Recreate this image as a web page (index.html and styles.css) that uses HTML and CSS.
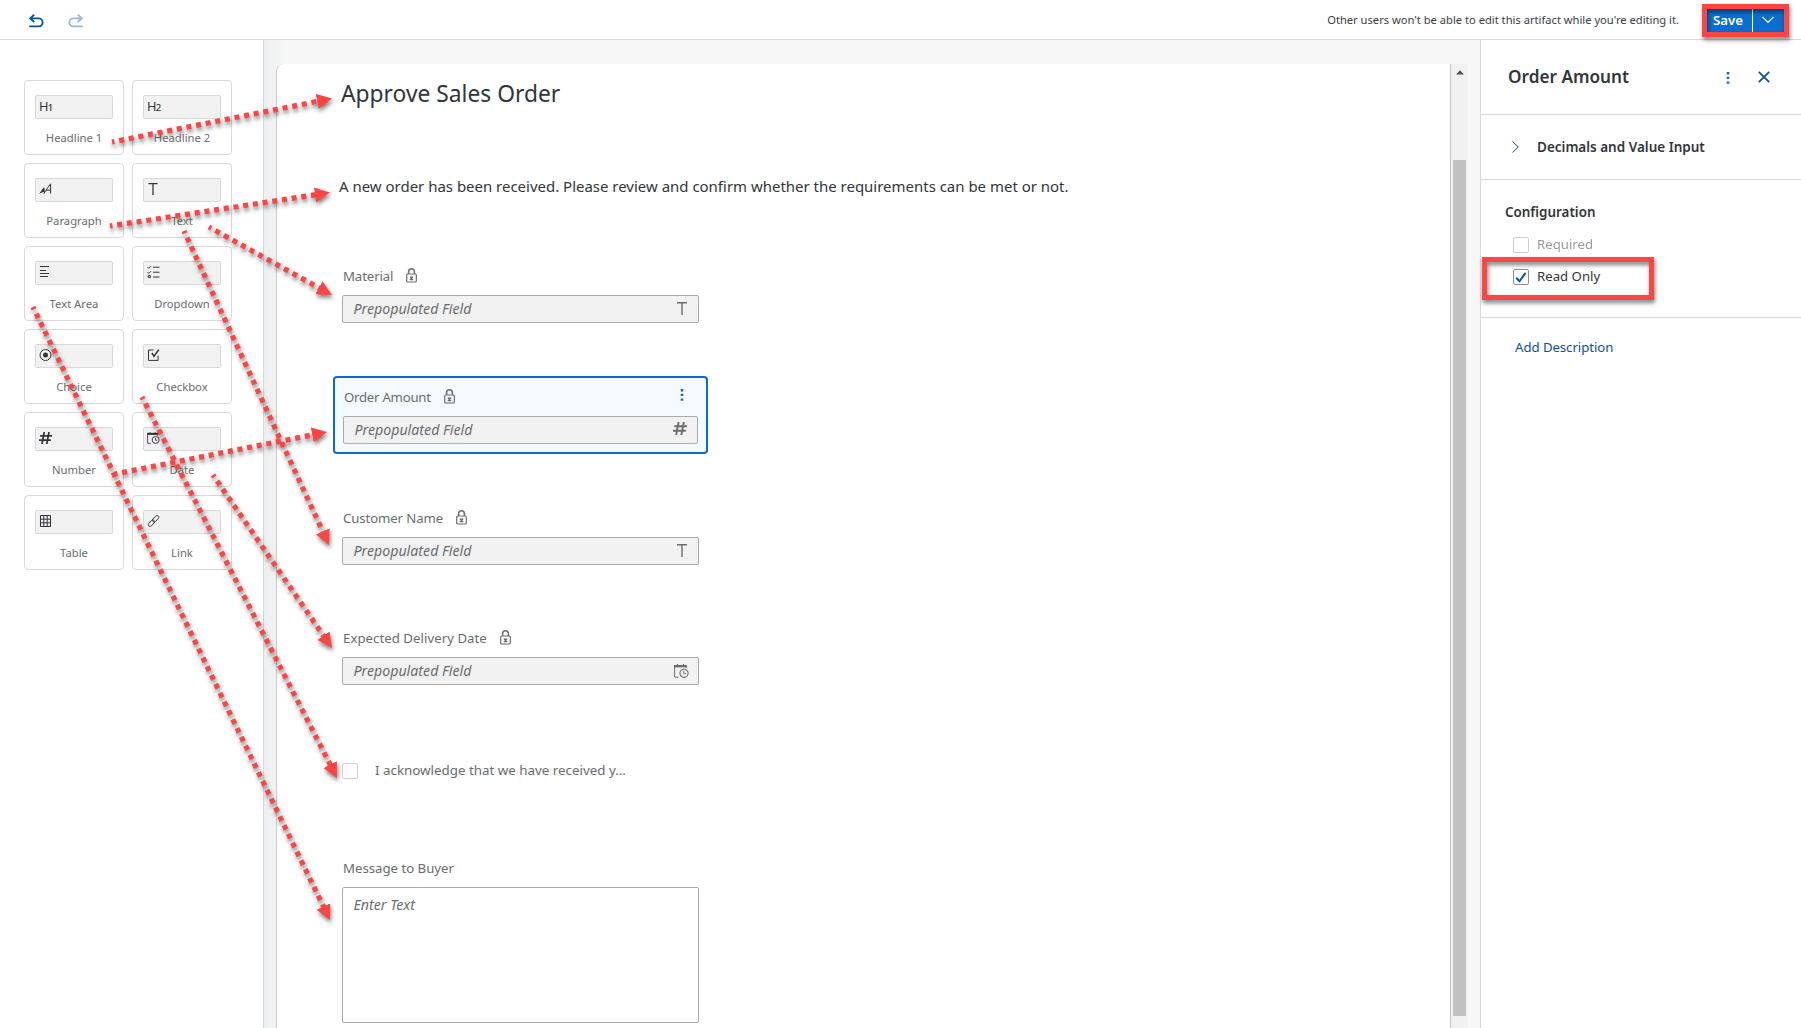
FILE: index.html
```
<!DOCTYPE html>
<html lang="en">
<head>
<meta charset="utf-8">
<title>Approve Sales Order</title>
<link rel="stylesheet" href="styles.css">
</head>
<body>
<svg class="sprite" aria-hidden="true">
  <symbol id="lock" viewBox="0 0 11 15"><path d="M2.6 6V3.7a2.9 2.9 0 0 1 5.8 0V6" fill="none" stroke="currentColor" stroke-width="1.500"/><rect x=".7" y="6" width="9.6" height="8" rx="1" fill="none" stroke="currentColor" stroke-width="1.200"/><path d="M3.8 8.5h3.4v1.4H6.4v1h.9v1.3H3.7v-1.3h.9v-1h-.8z" fill="currentColor"/></symbol>
  <symbol id="text" viewBox="0 0 10 13"><path d="M0 .7h10M5 .7V13" fill="none" stroke="currentColor" stroke-width="1.400"/></symbol>
  <symbol id="hash" viewBox="0 0 14 13"><path d="M5.6 0 3.2 13M10.8 0 8.4 13M1.2 4.2H14M0 8.8h12.8" fill="none" stroke="currentColor" stroke-width="1.900"/></symbol>
  <symbol id="date" viewBox="0 0 15 14"><path d="M3.5 0v2M9.5 0v2M1 13.2h3.5M.6 1v12.2M12.2 1v3" fill="none" stroke="currentColor" stroke-width="1"/><path d="M.2 1h12.4v2.4H.2z" fill="currentColor"/><circle cx="10" cy="9.3" r="4.1" fill="none" stroke="currentColor" stroke-width="1.1"/><path d="M9.8 7v2.6h2.1" fill="none" stroke="currentColor"/></symbol>
  <symbol id="dots" viewBox="0 0 4 12"><path d="M.7 0h2.6v2.4H.7zM.7 4.7h2.6v2.4H.7zM.7 9.4h2.6v2.4H.7z" fill="currentColor"/></symbol>
</svg>

<header class="toolbar">
  <svg class="undo" viewBox="0 0 15 14"><path d="M5.2.8 1.2 4.4l4 3.6M1.4 4.4h8.2a4 4 0 0 1 0 8H.2" fill="none" stroke="currentColor" stroke-width="1.9"/></svg>
  <svg class="undo redo" viewBox="0 0 15 14"><path d="M5.2.8 1.2 4.4l4 3.6M1.4 4.4h8.2a4 4 0 0 1 0 8H.2" fill="none" stroke="currentColor" stroke-width="1.9"/></svg>
  <p class="notice">Other users won't be able to edit this artifact while you're editing it.</p>
  <div class="save-split">
    <button class="save">Save</button>
    <button class="save-menu"><svg viewBox="0 0 12 8"><path d="m.5.8 5.5 5.6L11.500.8" fill="none" stroke="currentColor" stroke-width="1.2"/></svg></button>
  </div>
</header>

<div class="workspace">
  <aside class="palette">
    <div class="tile"><div class="chip"><span class="h-icon">H<small>1</small></span></div><span>Headline 1</span></div>
    <div class="tile"><div class="chip"><span class="h-icon">H<small>2</small></span></div><span>Headline 2</span></div>
    <div class="tile"><div class="chip"><svg class="i13" viewBox="0 0 13 12"><path d="M.8 10.500 4.900 4.800 5.400 10.300M2.200 8.600h3M4.800 10.500C7 8 9 3.500 11.600.8V10.500M7 7.200h4.600" fill="none" stroke="currentColor"/><path d="M1.200 10.300 4.900 4.800 5.200 8.500z" fill="currentColor"/></svg></div><span>Paragraph</span></div>
    <div class="tile"><div class="chip"><svg class="i-text"><use href="#text"/></svg></div><span>Text</span></div>
    <div class="tile"><div class="chip"><svg class="i13" viewBox="0 0 13 12"><path d="M1 .5h9M1 4.500h6M1 7.500h9M1 10.500h8" fill="none" stroke="currentColor" stroke-width="1.200"/></svg></div><span>Text Area</span></div>
    <div class="tile"><div class="chip"><svg class="i13" viewBox="0 0 13 12"><path d="M6 1.200h6.500M6 6.200h6.500M6 11h6.500M.6 1.200l1.200 1.200L4 .2M.6 6.200l1.200 1.200L4 5.200M1.200 9.500h2.100v2.100H1.200z" fill="none" stroke="currentColor"/></svg></div><span>Dropdown</span></div>
    <div class="tile"><div class="chip"><svg class="i13" viewBox="0 0 13 12"><circle cx="6.500" cy="6" r="5.500" fill="none" stroke="currentColor"/><circle cx="6.500" cy="6" r="2.500" fill="currentColor"/></svg></div><span>Choice</span></div>
    <div class="tile"><div class="chip"><svg class="i13" viewBox="0 0 13 12"><path d="M6.500 1H1.500v10.400h9.600V6.500" fill="none" stroke="currentColor"/><path d="m4.800 4 2.200 3.200L11.800.8" fill="none" stroke="currentColor" stroke-width="1.500"/></svg></div><span>Checkbox</span></div>
    <div class="tile"><div class="chip"><svg class="i13"><use href="#hash"/></svg></div><span>Number</span></div>
    <div class="tile"><div class="chip"><svg class="i13"><use href="#date"/></svg></div><span>Date</span></div>
    <div class="tile"><div class="chip"><svg class="i13" viewBox="0 0 13 12"><path d="M1.500.5h10v11h-10zM1.500 4.200h10M1.500 7.800h10M4.800.5v11M8.200.5v11" fill="none" stroke="currentColor"/></svg></div><span>Table</span></div>
    <div class="tile"><div class="chip"><svg class="i13" viewBox="0 0 13 12"><g fill="none" stroke="currentColor" stroke-width=".9" transform="rotate(-47 6.500 6)"><rect x="-.3" y="4.200" width="7.600" height="3.600" rx="1.800"/><rect x="5.700" y="4.200" width="7.600" height="3.600" rx="1.800"/></g></svg></div><span>Link</span></div>
  </aside>

  <main class="stage">
    <div class="canvas">
      <h1>Approve Sales Order</h1>
      <p class="intro">A new order has been received. Please review and confirm whether the requirements can be met or not.</p>
      <div class="field material">
        <div class="label">Material<svg class="lock"><use href="#lock"/></svg></div>
        <div class="input"><i>Prepopulated Field</i><svg class="t-icon"><use href="#text"/></svg></div>
      </div>
      <div class="field selected">
        <div class="label">Order Amount<svg class="lock"><use href="#lock"/></svg><svg class="dots"><use href="#dots"/></svg></div>
        <div class="input"><i>Prepopulated Field</i><svg class="hash-icon"><use href="#hash"/></svg></div>
      </div>
      <div class="field customer">
        <div class="label">Customer Name<svg class="lock"><use href="#lock"/></svg></div>
        <div class="input"><i>Prepopulated Field</i><svg class="t-icon"><use href="#text"/></svg></div>
      </div>
      <div class="field delivery">
        <div class="label">Expected Delivery Date<svg class="lock"><use href="#lock"/></svg></div>
        <div class="input"><i>Prepopulated Field</i><svg class="date-icon"><use href="#date"/></svg></div>
      </div>
      <div class="check acknowledge"><span class="box"></span><span class="caption">I acknowledge that we have received y...</span></div>
      <div class="field message">
        <div class="label">Message to Buyer</div>
        <div class="textarea"><i>Enter Text</i></div>
      </div>
    </div>
    <div class="scrollbar"><svg viewBox="0 0 8 5"><path d="M0 4.500 4 .3l4 4.200z" fill="#505050"/></svg><div class="thumb"></div></div>
  </main>

  <aside class="properties">
    <div class="prop-head"><h2>Order Amount</h2><svg class="dots"><use href="#dots"/></svg><svg class="close" viewBox="0 0 12 12"><path d="m.8.8 10.400 10.400M11.200.8.8 11.200" fill="none" stroke="currentColor" stroke-width="1.800"/></svg></div>
    <div class="prop-row"><svg viewBox="0 0 7 12"><path d="m.5.4 5.700 5.600L.5 11.600" fill="none" stroke="currentColor"/></svg>Decimals and Value Input</div>
    <div class="config">
      <h3>Configuration</h3>
      <div class="check disabled"><span class="box"></span><span class="caption">Required</span></div>
      <div class="check"><span class="box"><svg viewBox="0 0 12 11"><path d="m1.200 5.800 3.300 3.500L10.600.8" fill="none" stroke="currentColor" stroke-width="2"/></svg></span><span class="caption">Read Only</span></div>
    </div>
    <a class="add">Add Description</a>
  </aside>
</div>

<div class="callout callout-save"></div>
<div class="callout callout-readonly"></div>
<svg class="arrows" viewBox="0 0 1801 1028">
  <defs><marker id="head" markerUnits="userSpaceOnUse" markerWidth="15" markerHeight="15" refX="2" refY="7.500" orient="auto"><path d="M0 0 15 7.500 0 15z" fill="#ff4444"/></marker></defs>
  <path d="M112 142 319.200 101"/>
  <path d="M110 226 317.100 194.500"/>
  <path d="M209 227 320.600 288.700"/>
  <path d="M184 231 323.600 533.200"/>
  <path d="M33 307 324.300 908.300"/>
  <path d="M142 397 331.100 766.400"/>
  <path d="M115 474 314.200 434.500"/>
  <path d="M213 475 324.600 637.300"/>
</svg>
</body>
</html>
```
FILE: styles.css
```
* { box-sizing: border-box; }
body { margin: 0; height: 1028px; overflow: hidden; display: flex; flex-direction: column; background: #fff; color: #32363a; font: 13.2px/20px "Noto Sans", sans-serif; }
h1, h2, h3, p { margin: 0; }
svg { display: block; flex: none; }
.sprite { position: absolute; width: 0; height: 0; }
button { border: 0; padding: 0; font: inherit; color: #fff; background: #0a6ed1; }

.toolbar { flex: none; height: 40px; border-bottom: 1px solid #d9d9d9; display: flex; align-items: center; padding: 0 17px 0 29px; }
.undo { width: 15px; height: 14px; color: #0854a0; margin-top: 2px; }
.redo { margin-left: 24px; transform: scaleX(-1); opacity: .4; }
.notice { margin-left: auto; font-size: 11.16px; color: #3c4044; margin-top: 1px; }
.save-split { display: flex; width: 77px; height: 26px; margin: 1px 0 0 28px; gap: 1px; }
.save { width: 45px; font-weight: 600; padding-right: 3px; }
.save-menu { flex: 1; display: flex; align-items: center; justify-content: center; }
.save-menu svg { width: 12px; height: 8px; margin-right: 1px; }

.workspace { flex: 1; min-height: 0; display: flex; }
.palette { width: 264px; border-right: 1px solid #d9d9d9; padding: 40px 0 0 24px; display: grid; grid-template-columns: 100px 100px; grid-auto-rows: 75px; gap: 8px; align-content: start; }
.tile { border: 1px solid #d9d9d9; border-radius: 4px; display: flex; flex-direction: column; align-items: center; font-size: 11.25px; color: #6a6d70; padding-top: 14px; }
.tile > span { margin-top: 9px; }
.chip { width: 78px; height: 24px; border: 1px solid #d9d9d9; border-radius: 2px; background: #f2f2f2; padding: 4px 0 0 3px; color: #32363a; }
.h-icon { display: block; font-size: 12.800px; line-height: 14px; margin-top: -1px; letter-spacing: -.8px; }
.h-icon small { font-size: 9.500px; font-weight: 500; }
.i13 { width: 13px; height: 12px; }
.i-text { width: 10px; height: 12px; margin: 0 0 0 1px; }

.stage { flex: 1; background: linear-gradient(90deg, #edeef0, #f2f3f4 12px, #f7f7f7 24px); padding: 24px 12px 0; display: flex; }
.canvas { flex: 1; background: #fff; border-left: 1px solid #c9cbcd; border-top-left-radius: 8px; padding: 15px 0 0 65px; }
h1 { font-size: 22.800px; font-weight: 400; line-height: 30px; margin-left: -1px; }
.intro { font-size: 14.980px; line-height: 21px; margin: 67px 0 0 -3px; }
.field { width: 357px; color: #6a6d70; }
.label { display: flex; align-items: center; height: 20px; padding-left: 1px; margin-bottom: 9px; }
.lock { width: 11px; height: 15px; margin: -1px 0 0 13px; }
.input { height: 28px; border: 1px solid #a9abad; border-radius: 2px; background: #f2f2f2; display: flex; align-items: center; justify-content: space-between; padding: 0 11px 0 10.500px; }
.input i, .textarea i { font-size: 14.200px; }
.t-icon { width: 10px; height: 13px; margin-top: -1px; }
.hash-icon { width: 14px; height: 13px; margin: -3px -1px 0 0; }
.date-icon { width: 15px; height: 14px; margin: -1px -2px 0 0; }
.material { margin-top: 69px; }
.material .label { letter-spacing: -.1px; }
.selected { width: 375px; height: 78px; margin: 53px 0 0 -9px; border: 2px solid #0a6ed1; border-radius: 4px; background: #f5faff; padding: 9px 8px 0; }
.selected .label { letter-spacing: -.250px; }
.dots { width: 4px; height: 12px; color: #0a6ed1; }
.selected .dots { margin: -4px 14px 0 auto; }
.customer { margin-top: 54px; }
.customer .label { letter-spacing: -.1px; }
.delivery { margin-top: 63px; }
.delivery .label { letter-spacing: .05px; }
.check { display: flex; align-items: center; height: 16px; gap: 8px; }
.caption { margin-top: -2px; }
.box { width: 16px; height: 16px; border: 1px solid #89919a; border-radius: 2px; background: #fff; display: flex; align-items: center; justify-content: center; }
.box svg { width: 12px; height: 11px; color: #0854a0; }
.acknowledge { margin-top: 78px; gap: 17px; color: #6a6d70; font-size: 13.350px; }
.acknowledge .box { border-color: #cfd1d6; }
.message { margin-top: 79px; }
.textarea { height: 136px; border: 1px solid #a9abad; border-radius: 2px; padding: 7px 10.500px; }

.scrollbar { width: 18px; border-left: 1px solid #c4c4c4; background: #f1f1f1; padding-left: 2px; }
.scrollbar svg { width: 8px; height: 5px; margin: 6px 0 0 3px; }
.thumb { width: 13px; height: 856px; margin-top: 85px; background: #c1c1c1; }

.properties { width: 321px; border-left: 1px solid #d9d9d9; }
.prop-head { height: 75px; border-bottom: 1px solid #d9d9d9; display: flex; align-items: center; padding: 0 31px 1px 27px; }
h2 { font-size: 17.200px; font-weight: 600; margin-right: auto; }
.prop-head .dots { margin-right: 28px; margin-top: 2px; }
.close { width: 12px; height: 12px; color: #0854a0; }
.prop-row { height: 65px; border-bottom: 1px solid #d9d9d9; display: flex; align-items: center; gap: 18px; padding-left: 31px; font-size: 13.500px; font-weight: 600; }
.prop-row svg { width: 7px; height: 12px; color: #0854a0; }
.config { height: 138px; border-bottom: 1px solid #d9d9d9; padding: 22px 0 0 32px; }
h3 { font-size: 13.400px; font-weight: 600; line-height: 20px; margin: 0 0 15px -8px; }
.config .check + .check { margin-top: 16px; }
.disabled { opacity: .5; }
.disabled .box { border-color: #9a9da5; }
.add { display: block; margin: 19px 0 0 34px; color: #0854a0; letter-spacing: -.050px; }

.callout { position: absolute; border: 5px solid #ff4444; filter: drop-shadow(1px 3px 2px rgba(0, 0, 0, .5)); }
.callout-save { left: 1702px; top: 4px; width: 87px; height: 33px; }
.callout-readonly { left: 1482px; top: 257px; width: 172px; height: 43px; }
.arrows { position: absolute; left: 0; top: 0; width: 1801px; height: 1028px; pointer-events: none; fill: none; stroke: #ff4444; stroke-width: 5.200; stroke-dasharray: 5 4.800; stroke-dashoffset: 2.500; filter: drop-shadow(1px 3px 2px rgba(0, 0, 0, .5)); }
.arrows path { marker-end: url(#head); }
.arrows marker path { marker-end: none; stroke: none; }
```
